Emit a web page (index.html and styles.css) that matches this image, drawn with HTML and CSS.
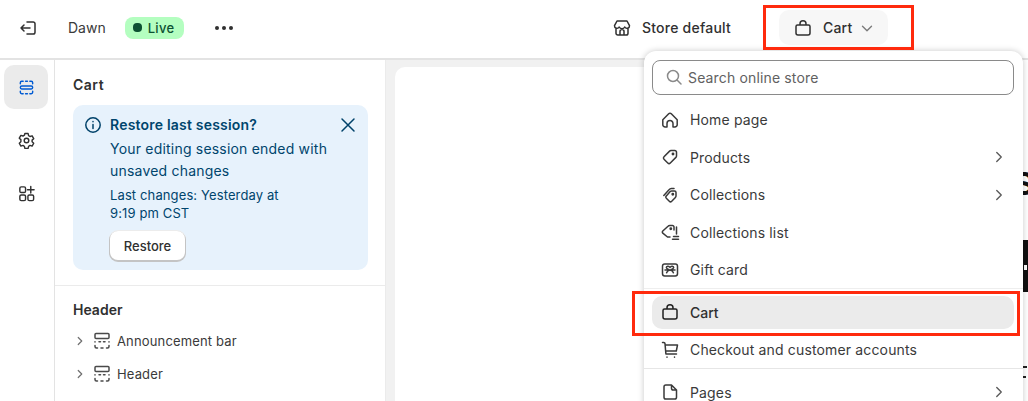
FILE: index.html
```html
<!DOCTYPE html>
<html lang="en">
<head>
<meta charset="utf-8">
<title>Theme editor</title>
<link rel="stylesheet" href="styles.css">
</head>
<body>
<div class="app">
  <header class="topbar">
    <div class="top-left">
      <svg class="ico exit" viewBox="0 0 20 20"><path d="M9 4h6.200a1.800 1.800 0 0 1 1.800 1.800v8.400a1.800 1.800 0 0 1-1.800 1.800H9M12 10H3M6 7l-3 3 3 3"/></svg>
      <span class="theme">Dawn</span>
      <span class="live"><i class="dot"></i>Live</span>
      <span class="more"><i></i><i></i><i></i></span>
    </div>
    <div class="top-right">
      <span class="store">
        <svg class="ico" viewBox="0 0 20 20"><path d="M5 3h10l2.500 4.700a2.500 2.500 0 0 1-4.700 1.300 3.200 3.200 0 0 1-5.600 0 2.500 2.500 0 0 1-4.700-1.300zM4 10.500v4.700A1.800 1.800 0 0 0 5.800 17h8.400a1.800 1.800 0 0 0 1.800-1.800v-4.700M8 17v-3.500a2 2 0 0 1 4 0V17"/></svg>
        Store default
      </span>
      <span class="picker">
        <svg class="ico" viewBox="0 0 20 20"><path d="M4.500 7h11A1.500 1.500 0 0 1 17 8.500V15a2 2 0 0 1-2 2H5a2 2 0 0 1-2-2V8.500A1.500 1.500 0 0 1 4.500 7zM7 7V5.800a3 3 0 0 1 6 0V7"/></svg>
        <span class="picker-label">Cart</span>
        <svg class="chev-down" viewBox="0 0 20 20"><path d="M5 8l5 5 5-5"/></svg>
      </span>
    </div>
  </header>
  <div class="body">
    <nav class="rail">
      <span class="rail-btn active">
        <svg class="ico rail-ico blue" viewBox="0 0 20 20"><path d="M5 8.500h10a1.500 1.500 0 0 1 0 3H5a1.500 1.500 0 0 1 0-3zM3.500 6V5A1.500 1.500 0 0 1 5 3.500h1.500M9 3.500h2M13.500 3.500H15A1.500 1.500 0 0 1 16.500 5v1M3.500 14v1A1.500 1.500 0 0 0 5 16.500h1.500M9 16.500h2M13.500 16.500H15a1.500 1.500 0 0 0 1.500-1.500v-1"/></svg>
      </span>
      <span class="rail-btn">
        <svg class="ico rail-ico" viewBox="0 0 20 20"><circle cx="10" cy="10" r="2.400"/><path d="M8.300 2.700h3.400l.5 2.200 1.500.9 2.200-.7 1.700 3-1.700 1.500v1.800l1.700 1.500-1.700 3-2.200-.7-1.500.9-.5 2.200H8.300l-.5-2.200-1.500-.9-2.200.7-1.700-3 1.700-1.500V9.100L2.400 7.600l1.700-3 2.200.7 1.500-.9z"/></svg>
      </span>
      <span class="rail-btn">
        <svg class="ico rail-ico" viewBox="0 0 20 20"><rect x="3" y="3" width="6" height="6" rx="1.500"/><rect x="3" y="11.500" width="6" height="6" rx="1.500"/><rect x="11.500" y="11.500" width="6" height="6" rx="1.500"/><path d="M14.500 2.500v7M11 6h7"/></svg>
      </span>
    </nav>
    <aside class="panel">
      <section class="panel-top">
        <h2 class="panel-title">Cart</h2>
        <div class="banner">
          <svg class="ico info" viewBox="0 0 20 20"><circle cx="10" cy="10" r="7.200"/><path d="M10 9.500v4M10 6.500v.2"/></svg>
          <div class="banner-body">
            <strong class="banner-title">Restore last session?</strong>
            <p class="banner-text">Your editing session ended with unsaved changes</p>
            <p class="banner-meta">Last changes: Yesterday at<br>9:19 pm CST</p>
            <button class="restore">Restore</button>
          </div>
          <svg class="ico close" viewBox="0 0 20 20"><path d="M4 4l12 12M16 4L4 16"/></svg>
        </div>
      </section>
      <section class="panel-sec">
        <h3 class="sec-title">Header</h3>
        <div class="tree-row">
          <svg class="tree-chev" viewBox="0 0 20 20"><path d="M7.500 5l5 5-5 5"/></svg>
          <svg class="ico tree-ico" viewBox="0 0 20 20"><rect x="3" y="2.500" width="14" height="5" rx="1"/><path d="M3 11v-.2M7 10.800h1.500M11.500 10.800H13M17 10.800v.2M3 14.500v1A1.500 1.500 0 0 0 4.500 17H5.500M9 17h2M14.500 17h1a1.500 1.500 0 0 0 1.500-1.500v-1"/></svg>
          <span>Announcement bar</span>
        </div>
        <div class="tree-row">
          <svg class="tree-chev" viewBox="0 0 20 20"><path d="M7.500 5l5 5-5 5"/></svg>
          <svg class="ico tree-ico" viewBox="0 0 20 20"><rect x="3" y="2.500" width="14" height="5" rx="1"/><path d="M3 11v-.2M7 10.800h1.500M11.500 10.800H13M17 10.800v.2M3 14.500v1A1.500 1.500 0 0 0 4.500 17H5.500M9 17h2M14.500 17h1a1.500 1.500 0 0 0 1.500-1.500v-1"/></svg>
          <span>Header</span>
        </div>
        <div class="tree-row tree-faded">
          <svg class="ico tree-ico tree-ico-solo" viewBox="0 0 20 20"><rect x="3" y="2.500" width="14" height="5" rx="1"/></svg>
        </div>
      </section>
    </aside>
    <main class="canvas">
      <div class="preview"></div>
    </main>
  </div>

  <div class="edge"><b class="e1">S</b><i class="e2"></i><i class="e2b"></i><i class="e3"></i><i class="e4"></i></div>

  <div class="menu">
    <div class="search">
      <svg class="ico search-ico" viewBox="0 0 20 20"><circle cx="9" cy="9" r="5.500"/><path d="M13 13l4 4"/></svg>
      <span>Search online store</span>
    </div>
    <div class="menu-list">
      <div class="item"><svg class="ico" viewBox="0 0 20 20"><path d="M2.800 9.800L8.700 3.700a1.800 1.800 0 0 1 2.600 0l5.900 6.100v4.900a2.300 2.300 0 0 1-2.300 2.300h-1.900v-3.500a3 3 0 0 0-6 0V17H5.100a2.300 2.300 0 0 1-2.300-2.300z"/></svg><span>Home page</span></div>
      <div class="item"><svg class="ico" viewBox="0 0 20 20"><path d="M11 3.500h3.800a1.700 1.700 0 0 1 1.700 1.700V9a2 2 0 0 1-.6 1.400l-5.600 5.600a1.800 1.800 0 0 1-2.500 0l-3.800-3.800a1.800 1.800 0 0 1 0-2.500l5.600-5.600A2 2 0 0 1 11 3.500z"/><circle cx="13" cy="7" r=".7"/></svg><span>Products</span><svg class="item-chev" viewBox="0 0 20 20"><path d="M7.500 5l5 5-5 5"/></svg></div>
      <div class="item"><svg class="ico" viewBox="0 0 20 20"><path d="M12 6h2.500A1.500 1.500 0 0 1 16 7.500V11a2 2 0 0 1-.6 1.400l-3.700 3.900a1.700 1.700 0 0 1-2.400 0l-3-3a1.700 1.700 0 0 1 0-2.400l3.900-4.300A2 2 0 0 1 12 6zM3.800 10.500L9 4.800c.6-.7 1.400-1.300 2.300-1.300H14"/><circle cx="12.800" cy="9.200" r=".7"/></svg><span>Collections</span><svg class="item-chev" viewBox="0 0 20 20"><path d="M7.500 5l5 5-5 5"/></svg></div>
      <div class="item"><svg class="ico" viewBox="0 0 20 20"><path d="M10 15H7.500L2.800 11.200a1.500 1.500 0 0 1 0-2.200L8 4.300a2.500 2.500 0 0 1 1.800-.8h2.700A1.500 1.500 0 0 1 14 5v3M12.500 17.300h6M13.500 14.500h5M16.500 5v7"/><circle cx="10.800" cy="6.800" r=".7"/></svg><span>Collections list</span></div>
      <div class="item"><svg class="ico" viewBox="0 0 20 20"><rect x="2.500" y="4" width="15" height="12" rx="2.200"/><path d="M10 10C8.500 9.500 6.500 9 6.300 7.600 6.200 6 9 5.500 10 7.500c1-2 3.800-1.500 3.700.1-.2 1.400-2.200 1.900-3.700 2.400zM10 10c-1.200.3-2.900 1-3.400 2.700M10 10c1.200.3 2.900 1 3.400 2.700M5 10h10"/></svg><span>Gift card</span></div>
      <hr class="menu-sep sep-a">
      <div class="item current"><svg class="ico" viewBox="0 0 20 20"><path d="M4.500 7h11A1.500 1.500 0 0 1 17 8.500V15a2 2 0 0 1-2 2H5a2 2 0 0 1-2-2V8.500A1.500 1.500 0 0 1 4.500 7zM7 7V5.800a3 3 0 0 1 6 0V7"/></svg><span>Cart</span></div>
      <div class="item item-check"><svg class="ico" viewBox="0 0 20 20"><path d="M2.500 2.500h1.300A1.200 1.200 0 0 1 5 3.600l.9 10.400h10.600M5.200 5h12.300l-1.200 6H5.700"/><path d="M7 17v.2M14.500 17v.2"/></svg><span>Checkout and customer accounts</span></div>
      <hr class="menu-sep sep-b">
      <div class="item item-pages"><svg class="ico" viewBox="0 0 20 20"><path d="M5.800 3h5.700l5 5v7.200a1.800 1.800 0 0 1-1.800 1.800H5.800A1.800 1.800 0 0 1 4 15.200V4.800A1.800 1.800 0 0 1 5.800 3zM11.500 3v3.200A1.800 1.800 0 0 0 13.300 8h3.200"/></svg><span>Pages</span><svg class="item-chev" viewBox="0 0 20 20"><path d="M7.500 5l5 5-5 5"/></svg></div>
    </div>
  </div>

  <div class="hl hl-top"></div>
  <div class="hl hl-item"></div>
</div>
</body>
</html>
```

FILE: styles.css
```css
* { box-sizing: border-box; }
html, body { margin: 0; padding: 0; }
body {
  width: 1028px; height: 401px; overflow: hidden;
  font-family: Inter, "Liberation Sans", sans-serif;
  font-size: 14px; color: #303030; background: #fff;
}
.app { position: relative; width: 1028px; height: 401px; overflow: hidden; }
.ico { width: 20px; height: 20px; flex: none; fill: none; stroke: #303030; stroke-width: 1.5; stroke-linecap: round; stroke-linejoin: round; }

.topbar { height: 60px; display: flex; justify-content: space-between; align-items: center; border-bottom: 2px solid #e3e3e3; background: #fff; padding: 0 0 3px 18px; }
.top-left { display: flex; align-items: center; }
.exit { margin-right: 30px; }
.theme { color: #3a3a3a; }
.live { display: inline-flex; align-items: center; gap: 6px; height: 22px; width: 59px; margin-left: 19px; padding-left: 8px; border-radius: 8px; background: #b4fec0; color: #0c5132; font-weight: 500; font-size: 13px; letter-spacing: .3px; }
.dot { width: 9px; height: 9px; border-radius: 4px; background: #0c5132; }
.more { display: inline-flex; gap: 3px; margin-left: 31px; }
.more i { width: 4px; height: 4px; border-radius: 50%; background: #303030; }
.top-right { display: flex; align-items: center; margin-right: 140px; }
.store { display: flex; align-items: center; gap: 10px; font-weight: 500; letter-spacing: .23px; margin-right: 48px; }
.picker { display: flex; align-items: center; width: 109px; height: 35px; padding-left: 14px; border-radius: 10px; background: #f7f7f7; font-weight: 500; letter-spacing: .2px; }
.picker-label { margin-left: 10px; }
.chev-down { width: 18px; height: 18px; margin-left: 6px; margin-top: 1px; fill: none; stroke: #7a7a7a; stroke-width: 1.5; stroke-linecap: round; stroke-linejoin: round; }

.body { display: flex; height: 341px; }
.rail { width: 55px; flex: none; border-right: 1px solid #e3e3e3; padding: 5px 0 0 4px; display: flex; flex-direction: column; gap: 9px; }
.rail-btn { width: 44px; height: 44px; display: flex; align-items: center; justify-content: center; border-radius: 10px; }
.rail-btn.active { background: #ebebeb; }
.rail-ico { width: 19px; height: 19px; }
.blue { stroke: #005bd3; }
.panel { width: 331px; flex: none; background: #fff; border-right: 1px solid #ebebeb; overflow: hidden; }
.panel-top { padding: 16px 17px 15px 18px; border-bottom: 1px solid #ebebeb; }
.panel-title { margin: 0 0 12px; font-size: 14px; line-height: 17px; font-weight: 600; letter-spacing: .5px; }
.banner { display: flex; background: #e7f2fc; border-radius: 10px; padding: 10px; color: #00456d; height: 165px; }
.info { stroke: #00426a; margin-right: 7px; }
.banner-body { flex: 1; }
.banner-title { display: block; font-weight: 600; line-height: 20px; letter-spacing: .2px; }
.banner-text { margin: 3px 0 0; line-height: 22px; letter-spacing: .2px; }
.banner-meta { margin: 4px 0 0; font-size: 13px; line-height: 18px; letter-spacing: .12px; }
.restore { display: block; margin-top: 9px; width: 75px; height: 29px; padding: 0; border: 0; border-radius: 8px; background: #fff; box-shadow: 0 1px 0 1px #c4c4c4, 0 0 0 1px #ececec; font: 500 13px Inter, sans-serif; color: #303030; }
.close { stroke: #00426a; }
.panel-sec { padding: 15px 18px 0; }
.sec-title { margin: 0 0 5px; font-size: 14px; line-height: 18px; font-weight: 600; }
.tree-row { display: flex; align-items: center; height: 33px; font-size: 13px; color: #3a3a3a; letter-spacing: .15px; }
.tree-chev { width: 14px; height: 14px; flex: none; fill: none; stroke: #707070; stroke-width: 1.7; stroke-linecap: round; stroke-linejoin: round; }
.tree-ico { width: 20px; height: 20px; margin: 0 5px; stroke: #4a4a4a; }
.tree-faded { opacity: .25; }
.tree-ico-solo { margin: 6px 0 0 19px; }
.canvas { flex: 1; background: #f1f1f1; padding: 7px 0 0 9px; }
.preview { height: 400px; background: #fff; border-radius: 10px 0 0 0; }

.edge { position: absolute; left: 1023px; top: 60px; width: 5px; height: 341px; overflow: hidden; background: #fff; }
.e1 { position: absolute; left: -9px; top: 106px; font-size: 31px; line-height: 36px; color: #111; }
.e2 { position: absolute; left: 0; top: 180px; width: 5px; height: 52px; background: #111; }
.e2b { position: absolute; left: 1px; top: 205px; width: 3px; height: 5px; background: #fff; }
.e3 { position: absolute; left: 0; top: 306px; width: 4px; height: 2px; background: #222; }
.e4 { position: absolute; left: 0; top: 316px; width: 3px; height: 2px; background: #222; }

.menu { position: absolute; left: 644px; top: 51px; width: 379px; height: 370px; background: #fff; border-radius: 12px; box-shadow: 0 0 6px rgba(0,0,0,.22); padding: 9px 9px 0 8px; }
.search { display: flex; align-items: center; height: 35px; border: 1px solid #8a8a8a; border-radius: 8px; padding: 0 0 1px 11px; gap: 4px; color: #616161; letter-spacing: .15px; }
.search-ico { stroke: #8a8a8a; }
.menu-list { margin-top: 6px; }
.item { display: flex; align-items: center; height: 37.5px; padding: 0 6px 0 8px; color: #3a3a3a; letter-spacing: .15px; border-radius: 10px; }
.item .ico { margin-right: 10px; stroke: #3a3a3a; }
.item-chev { width: 18px; height: 18px; margin-left: auto; fill: none; stroke: #5a5a5a; stroke-width: 1.5; stroke-linecap: round; stroke-linejoin: round; }
.item.current { height: 33px; padding-bottom: 1px; background: #ebebeb; color: #303030; font-weight: 500; letter-spacing: 0; }
.item.current .ico { stroke: #1f1f1f; }
.menu-sep { border: 0; border-top: 1px solid #e6e6e6; margin: 0 -9px 0 -8px; }
.sep-a { margin-top: -1px; margin-bottom: 7.5px; border-color: #eeeeee; }
.item-check { margin-top: 2px; }
.sep-b { margin-top: -1px; margin-bottom: 5px; }

.hl { position: absolute; border: 3px solid #ff2a0d; }
.hl-top { left: 763px; top: 5px; width: 151px; height: 45px; }
.hl-item { left: 632px; top: 291px; width: 388px; height: 45px; }
```
